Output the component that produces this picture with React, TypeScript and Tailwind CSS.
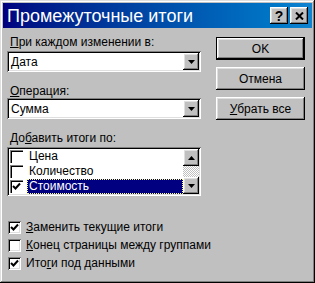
import React from "react";

const raised =
  "shadow-[inset_-1px_-1px_#000,inset_1px_1px_#fff,inset_-2px_-2px_#808080,inset_2px_2px_#dfdfdf]";
const sunken =
  "shadow-[inset_1px_1px_#808080,inset_-1px_-1px_#fff,inset_2px_2px_#000,inset_-2px_-2px_#dfdfdf]";

const Arrow = ({ up = false }: { up?: boolean }) => (
  <svg width="7" height="4" viewBox="0 0 7 4" className={up ? "rotate-180" : ""}>
    <path d="M0 0h7L3.5 4z" fill="#000" />
  </svg>
);

const Tick = () => (
  <svg width="9" height="9" viewBox="0 0 9 9">
    <path d="M1 4l2.5 2.5L8 1.5" stroke="#000" strokeWidth="2" fill="none" />
  </svg>
);

const CheckBox = ({ checked, flat = false }: { checked?: boolean; flat?: boolean }) => (
  <div
    className={`w-[13px] h-[13px] bg-white flex items-center justify-center shrink-0 ${
      flat ? "shadow-[inset_1px_1px_#808080,inset_2px_2px_#000]" : sunken
    }`}
  >
    {checked && <Tick />}
  </div>
);

const Combo = ({ value }: { value: string }) => (
  <div className={`h-[21px] bg-white flex items-center pl-[4px] pr-[2px] ${sunken}`}>
    <span className="flex-1">{value}</span>
    <div className={`w-[16px] h-[17px] bg-[#c0c0c0] flex items-center justify-center ${raised}`}>
      <Arrow />
    </div>
  </div>
);

const Button = ({ children, isDefault = false }: { children: React.ReactNode; isDefault?: boolean }) => (
  <div className={isDefault ? "border border-black" : ""}>
    <div
      className={`${isDefault ? "h-[21px]" : "h-[23px]"} bg-[#c0c0c0] flex items-center justify-center ${raised}`}
    >
      {children}
    </div>
  </div>
);

export default function App() {
  return (
    <div
      className="w-[315px] h-[283px] bg-[#c0c0c0] p-[3px] text-[12px] text-black shadow-[inset_-1px_-1px_#000,inset_1px_1px_#dfdfdf,inset_-2px_-2px_#808080,inset_2px_2px_#fff]"
      style={{ fontFamily: '"Liberation Sans", Arial, sans-serif' }}
    >
      {/* Title bar */}
      <div className="h-[25px] bg-gradient-to-r from-[#000080] to-[#1084d0] flex items-center pl-[4px] pr-[4px]">
        <span className="flex-1 text-white text-[18px] leading-none">Промежуточные итоги</span>
        <div className="flex gap-[2px]">
          <div className={`w-[18px] h-[17px] bg-[#c0c0c0] flex items-center justify-center font-bold text-[14px] leading-none ${raised}`}>
            ?
          </div>
          <div className={`w-[18px] h-[17px] bg-[#c0c0c0] flex items-center justify-center ${raised}`}>
            <svg width="9" height="8" viewBox="0 0 9 8">
              <path d="M1 0.5l7 7M8 0.5l-7 7" stroke="#000" strokeWidth="2" />
            </svg>
          </div>
        </div>
      </div>

      <div className="flex flex-col pl-[4px]">
        <div className="flex">
          {/* Left column */}
          <div className="w-[194px] flex flex-col">
            <div className="mt-[7px] h-[14px] leading-[14px] pl-[3px]">
              <u>П</u>ри каждом изменении в:
            </div>
            <div className="mt-[2px]">
              <Combo value="Дата" />
            </div>
            <div className="mt-[12px] h-[14px] leading-[14px] pl-[3px]">
              <u>О</u>перация:
            </div>
            <div>
              <Combo value="Сумма" />
            </div>
            <div className="mt-[12px] h-[14px] leading-[14px] pl-[3px]">
              До<u>б</u>авить итоги по:
            </div>
            <div className={`mt-[2px] h-[49px] bg-white flex p-[2px] ${sunken}`}>
              <div className="flex-1 flex flex-col">
                {[
                  ["Цена", false],
                  ["Количество", false],
                  ["Стоимость", true],
                ].map(([label, sel]) => (
                  <div key={label as string} className="h-[15px] flex items-center pl-[1px]">
                    <CheckBox flat checked={sel as boolean} />
                    <span
                      className={`ml-[4px] flex-1 h-[15px] leading-[15px] pl-[2px] ${
                        sel ? "bg-[#000080] text-white outline-1 outline-dotted outline-[#ffff80] -outline-offset-1" : ""
                      }`}
                    >
                      {label as string}
                    </span>
                  </div>
                ))}
              </div>
              <div className="w-[16px] flex flex-col">
                <div className={`h-[17px] bg-[#c0c0c0] flex items-center justify-center ${raised}`}>
                  <Arrow up />
                </div>
                <div className="flex-1 bg-[repeating-conic-gradient(#c0c0c0_0_25%,#fff_0_50%)] bg-[length:2px_2px]" />
                <div className={`h-[17px] bg-[#c0c0c0] flex items-center justify-center ${raised}`}>
                  <Arrow />
                </div>
              </div>
            </div>
          </div>

          {/* Right column */}
          <div className="ml-[15px] w-[89px] flex flex-col gap-[7px] mt-[9px]">
            <Button isDefault>OK</Button>
            <Button>Отмена</Button>
            <Button>
              <span>
                <u>У</u>брать все
              </span>
            </Button>
          </div>
        </div>

        {/* Bottom options */}
        <div className="mt-[22px] flex flex-col">
          <div className="h-[18px] flex items-center pl-[1px]">
            <CheckBox checked />
            <span className="ml-[5px]">
              <u>З</u>аменить текущие итоги
            </span>
          </div>
          <div className="h-[18px] flex items-center pl-[1px]">
            <CheckBox />
            <span className="ml-[5px]">
              <u>К</u>онец страницы между группами
            </span>
          </div>
          <div className="h-[18px] flex items-center pl-[1px]">
            <CheckBox checked />
            <span className="ml-[5px]">
              Ито<u>г</u>и под данными
            </span>
          </div>
        </div>
      </div>
    </div>
  );
}
